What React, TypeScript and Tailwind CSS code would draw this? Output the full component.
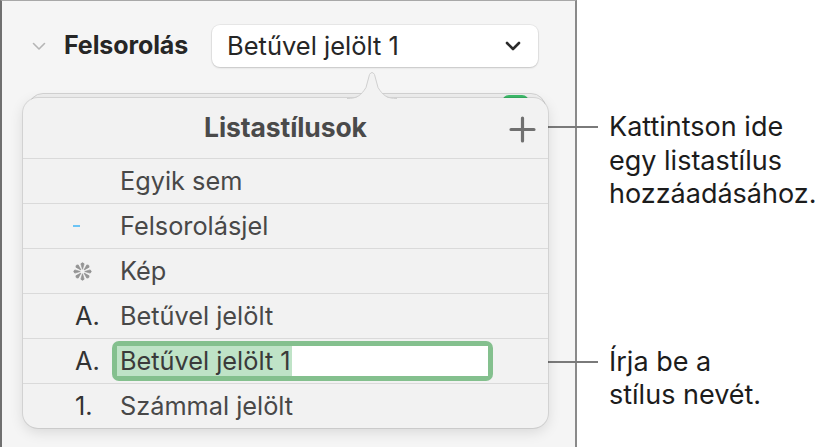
import type { ReactNode } from "react";

type Row = { mark: ReactNode; label: string; editing?: boolean };

function Asterisk() {
  // eight-spoke "image bullet" glyph
  const spokes = [0, 45, 90, 135, 180, 225, 270, 315];
  return (
    <svg width="19" height="19" viewBox="0 0 20 20" className="ml-[-2px]">
      {spokes.map((a) => (
        <path
          key={a}
          d="M10 7.6 L8.3 1.9 Q10 -0.3 11.7 1.9 Z"
          fill="#949494"
          stroke="#949494"
          strokeWidth="0.8"
          strokeLinejoin="round"
          transform={`rotate(${a} 10 10)`}
        />
      ))}
    </svg>
  );
}

const rows: Row[] = [
  { mark: null, label: "Egyik sem" },
  { mark: <span className="block w-[7px] h-[2px] bg-[#6cc4f5] ml-[-2px]" />, label: "Felsorolásjel" },
  { mark: <Asterisk />, label: "Kép" },
  { mark: <span>A.</span>, label: "Betűvel jelölt" },
  { mark: <span>A.</span>, label: "Betűvel jelölt 1", editing: true },
  { mark: <span>1.</span>, label: "Számmal jelölt" },
];

export default function App() {
  return (
    <div className="relative flex w-[825px] h-[447px] bg-white overflow-hidden font-['Inter','Liberation_Sans',sans-serif]">
      {/* inspector panel */}
      <div className="w-[577px] h-full shrink-0 bg-[#f5f5f5] border-l-2 border-l-[#707070] border-t border-t-[#a8a8a8] border-r-2 border-r-[#8a8a8a] flex flex-col">
        <div className="flex items-center h-[42px] mt-[24px] pl-[30px]">
          <svg width="14" height="9" viewBox="0 0 14 9" className="shrink-0">
            <path d="M1.5 1.5 L7 7 L12.5 1.5" fill="none" stroke="#b5b5b5" strokeWidth="1.6" strokeLinecap="round" strokeLinejoin="round" />
          </svg>
          <span className="ml-[18px] text-[25px] font-bold text-[#262626] tracking-[-0.1px]">Felsorolás</span>
          <button className="ml-auto mr-[37px] w-[326px] h-[42px] bg-white rounded-[8px] shadow-[0_0_0_1px_rgba(0,0,0,0.05),0_1px_2px_rgba(0,0,0,0.15)] flex items-center pl-[15px] pr-[17px] text-[25.5px] text-[#262626]">
            <span className="flex-1 text-left">Betűvel jelölt 1</span>
            <svg width="16" height="10" viewBox="0 0 16 10">
              <path d="M2 2 L8 8 L14 2" fill="none" stroke="#2b2b2b" strokeWidth="2.6" strokeLinecap="round" strokeLinejoin="round" />
            </svg>
          </button>
        </div>

        <div className="relative mt-[31px] ml-[21px] w-[525px]">
          {/* control underneath the popover */}
          <div className="absolute -top-[5px] left-[5px] right-[2px] h-[60px] rounded-[15px] bg-[#efefef] border border-[#d2d2d2]" />
          <div className="absolute -top-[3px] left-[479px] w-[27px] h-[14px] rounded-full bg-[#3dbb6a]" />

          {/* popover arrow */}
          <svg width="50" height="27" viewBox="0 0 50 27" className="absolute -top-[26px] left-[324px] z-20">
            <path d="M0 27 C 10 27 14 24 19 16 L 22.5 3 Q 25 -1 27.5 3 L 31 16 C 36 24 40 27 50 27 Z" fill="#f2f2f2" />
            <path d="M0 26.5 C 10 26.5 14 23.5 19 15.5 L 22.5 2.5 Q 25 -1.5 27.5 2.5 L 31 15.5 C 36 23.5 40 26.5 50 26.5" fill="none" stroke="#d0d0d0" strokeWidth="1" />
          </svg>

          <div className="relative z-10 rounded-[15px] bg-[#f2f2f2] shadow-[0_0_0_1px_rgba(0,0,0,0.09),0_4px_14px_rgba(0,0,0,0.12)]">
            <div className="grid grid-cols-[1fr_auto_1fr] items-center h-[60px]">
              <span />
              <span className="text-[26.5px] font-bold text-[#4a4a4a] tracking-[-0.1px]">Listastílusok</span>
              <svg width="27" height="27" viewBox="0 0 27 27" className="justify-self-end mr-[12px] mt-[2px]">
                <path d="M13.5 2 V25 M2 13.5 H25" stroke="#707070" strokeWidth="3.2" strokeLinecap="round" />
              </svg>
            </div>
            {rows.map((r) => (
              <div key={r.label} className="flex items-center h-[45px] border-t border-[#dadada] text-[25.3px]">
                <div className="w-[89px] shrink-0 pl-[52px] flex items-center text-[#333333]">{r.mark}</div>
                {r.editing ? (
                  <div className="w-[381px] h-[40px] rounded-[7px] bg-[#84c08e] p-[5px]">
                    <div className="h-full bg-white flex items-center">
                      <span className="h-full flex items-center bg-[#bfe3c7] pl-[3px] pr-[1px] text-[#3a3a3a]">{r.label}</span>
                    </div>
                  </div>
                ) : (
                  <span className="pl-[8px] text-[#484848]">{r.label}</span>
                )}
              </div>
            ))}
          </div>
        </div>
      </div>

      {/* callouts */}
      <div className="flex-1 flex flex-col pl-[32px] pt-[110px] text-[27px] leading-[33.5px] text-[#1c1c1c]">
        <p>
          Kattintson ide
          <br />
          egy listastílus
          <br />
          hozzáadásához.
        </p>
        <p className="mt-[134px]">
          Írja be a
          <br />
          stílus nevét.
        </p>
      </div>

      <div className="absolute left-[537px] top-[126px] w-[61px] h-[2px] bg-[#7a7a7a]" />
      <div className="absolute left-[493px] top-[361px] w-[105px] h-[2px] bg-[#7a7a7a]" />
    </div>
  );
}
